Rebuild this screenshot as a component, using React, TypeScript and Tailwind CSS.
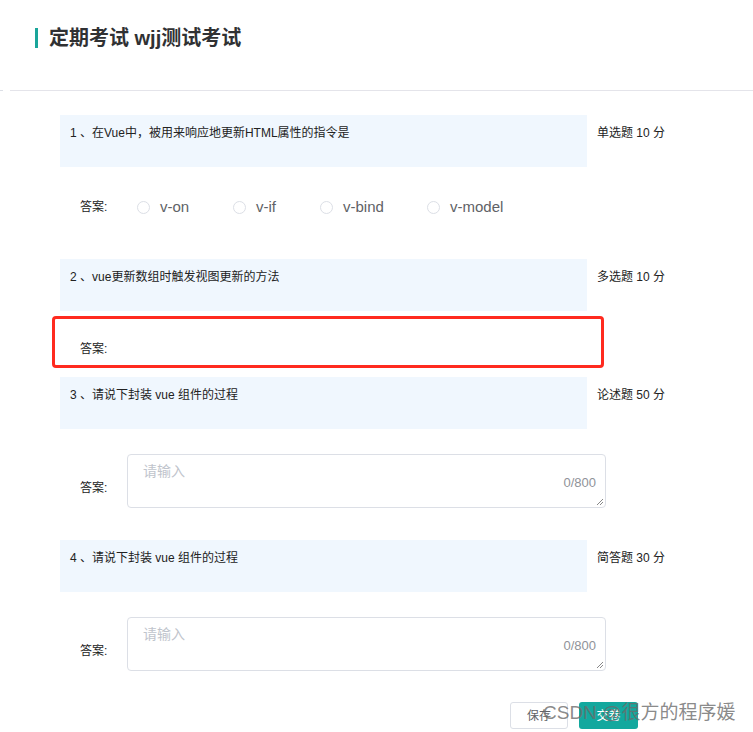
import React from 'react';

const font = { fontFamily: '"Liberation Sans", "Noto Sans CJK SC", sans-serif' };

interface Question {
  no: number;
  title: string;
  type: string;
  score: number;
}

const QuestionHead: React.FC<{ q: Question }> = ({ q }) => (
  <div className="flex items-start">
    <div className="w-[527px] h-[52px] bg-[#f0f7fe] pl-[10px] pt-[10px] text-[12px] leading-[16px] text-[#222]">
      {q.no} 、{q.title}
    </div>
    <div className="ml-[10px] pt-[10px] text-[12px] leading-[16px] text-[#222]">
      {q.type} {q.score} 分
    </div>
  </div>
);

const Radio: React.FC<{ label: string; className?: string }> = ({ label, className }) => (
  <label className={`flex items-center ${className ?? ''}`}>
    <span className="w-[13px] h-[13px] rounded-full border border-[#dcdfe6] bg-white" />
    <span className="ml-[10px] text-[15px] leading-[16px] text-[#606266]">{label}</span>
  </label>
);

const TextAnswer: React.FC = () => (
  <div className="flex items-start pt-[25px]">
    <span className="ml-[20px] mt-[26px] w-[47px] text-[12px] leading-[16px] text-[#222]">答案:</span>
    <div className="relative w-[479px] h-[54px] rounded-[4px] border border-[#dcdfe6] bg-white">
      <span className="absolute left-[15px] top-[8px] text-[14px] leading-[16px] text-[#c0c4cc]">请输入</span>
      <span className="absolute right-[9px] top-[20px] text-[13px] leading-[16px] text-[#909399]">0/800</span>
      <svg className="absolute right-[1px] bottom-[1px]" width="8" height="8" viewBox="0 0 8 8">
        <path d="M7 1L1 7M7 4L4 7" stroke="#888" strokeWidth="1" />
      </svg>
    </div>
  </div>
);

const questions: Question[] = [
  { no: 1, title: '在Vue中，被用来响应地更新HTML属性的指令是', type: '单选题', score: 10 },
  { no: 2, title: 'vue更新数组时触发视图更新的方法', type: '多选题', score: 10 },
  { no: 3, title: '请说下封装 vue 组件的过程', type: '论述题', score: 50 },
  { no: 4, title: '请说下封装 vue 组件的过程', type: '简答题', score: 30 },
];

const App: React.FC = () => {
  return (
    <div className="relative w-[753px] h-[732px] bg-white overflow-hidden" style={font}>
      {/* header */}
      <div className="flex items-center pl-[35px] pt-[27px] h-[48px]">
        <span className="w-[3px] h-[20px] bg-[#1aa59a]" />
        <h1 className="ml-[11px] text-[20px] leading-[20px] font-bold text-[#303133]">定期考试 wjj测试考试</h1>
      </div>
      <div className="flex mt-[42px] h-px">
        <span className="w-[3px] bg-[#dcdfe6]" />
        <span className="ml-[7px] flex-1 bg-[#e4e4ea]" />
      </div>

      <div className="pl-[60px] pt-[24px]">
        {/* q1 */}
        <QuestionHead q={questions[0]} />
        <div className="h-[92px] pt-[32px]">
          <div className="flex items-center h-[16px]">
            <span className="ml-[20px] w-[57px] text-[12px] leading-[16px] text-[#222]">答案:</span>
            <Radio label="v-on" className="w-[96px]" />
            <Radio label="v-if" className="w-[87px]" />
            <Radio label="v-bind" className="w-[107px]" />
            <Radio label="v-model" />
          </div>
        </div>

        {/* q2 */}
        <QuestionHead q={questions[1]} />
        <div className="h-[66px] pt-[30px]">
          <span className="block ml-[20px] text-[12px] leading-[16px] text-[#222]">答案:</span>
        </div>

        {/* q3 */}
        <QuestionHead q={questions[2]} />
        <div className="h-[111px]">
          <TextAnswer />
        </div>

        {/* q4 */}
        <QuestionHead q={questions[3]} />
        <TextAnswer />

        <div className="flex w-[578px] justify-end mt-[31px]">
          <button className="w-[58px] h-[27px] rounded-[3px] border border-[#dcdfe6] bg-white text-[12px] text-[#606266]">
            保存
          </button>
          <button className="ml-[11px] w-[59px] h-[27px] rounded-[3px] bg-[#13a89e] text-[12px] text-white">
            交卷
          </button>
        </div>
      </div>

      {/* annotation */}
      <div className="absolute left-[52px] top-[316px] w-[552px] h-[52px] rounded-[4px] border-[3px] border-[#ff2a1f] pointer-events-none" />
      <div className="absolute left-[543px] top-[700px] text-[19px] leading-[26px] text-[#6b6b6b]/80 whitespace-nowrap pointer-events-none">
        CSDN @很方的程序媛
      </div>
    </div>
  );
};

export default App;
